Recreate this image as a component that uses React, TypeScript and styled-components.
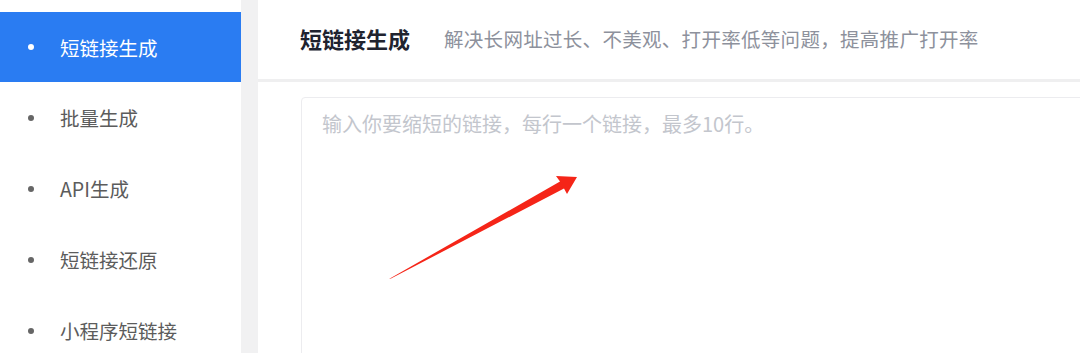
import React from 'react';
import styled, { createGlobalStyle } from 'styled-components';

const GlobalStyle = createGlobalStyle`
  html, body {
    margin: 0;
    padding: 0;
    background: #fff;
    overflow: hidden;
  }
  * {
    box-sizing: border-box;
  }
`;

const Page = styled.div`
  position: relative;
  display: flex;
  width: 1080px;
  height: 353px;
  overflow: hidden;
  font-family: 'Noto Sans CJK SC', 'Noto Sans', sans-serif;
`;

const Sidebar = styled.nav`
  width: 241px;
  flex: none;
  padding-top: 12px;
  display: flex;
  flex-direction: column;
  background: #fff;
`;

const NavItem = styled.div<{ $active?: boolean }>`
  flex: none;
  height: ${(props) => (props.$active ? '70px' : '71px')};
  display: flex;
  align-items: center;
  padding-left: 28px;
  font-size: 19.5px;
  color: ${(props) => (props.$active ? '#fff' : '#5c5c5c')};
  background: ${(props) => (props.$active ? '#2a7cf2' : 'transparent')};
  cursor: pointer;
`;

const Bullet = styled.span<{ $active?: boolean }>`
  width: 6px;
  height: 6px;
  border-radius: 50%;
  margin-right: 26px;
  background: ${(props) => (props.$active ? '#fff' : '#666')};
`;

const Gutter = styled.div`
  width: 17px;
  flex: none;
  background: #f1f1f2;
`;

const Main = styled.main`
  width: 860px;
  flex: none;
  display: flex;
  flex-direction: column;
`;

const Header = styled.header`
  height: 82px;
  flex: none;
  display: flex;
  align-items: center;
  gap: 34px;
  padding: 0 0 3px 42px;
  border-bottom: 3px solid #efeff0;
`;

const Title = styled.h1`
  margin: 0;
  font-size: 22px;
  font-weight: 700;
  color: #20232f;
`;

const Subtitle = styled.p`
  margin: 0;
  font-size: 19.5px;
  letter-spacing: 0.3px;
  color: #8d919c;
`;

const Body = styled.section`
  flex: 1;
  padding: 15px 0 0 43px;
`;

const LinkInput = styled.textarea`
  display: block;
  width: 100%;
  height: 300px;
  padding: 12px 20px;
  border: 1px solid #ececef;
  border-radius: 4px;
  resize: none;
  outline: none;
  font-family: inherit;
  font-size: 20px;
  line-height: 28px;
  color: #333;
  &::placeholder {
    color: #c3c6cd;
  }
`;

const Annotation = styled.svg`
  position: absolute;
  left: 0;
  top: 0;
  pointer-events: none;
`;

const navItems = ['短链接生成', '批量生成', 'API生成', '短链接还原', '小程序短链接'];

export default function App() {
  return (
    <Page>
      <GlobalStyle />
      <Sidebar>
        {navItems.map((item, i) => (
          <NavItem key={item} $active={i === 0}>
            <Bullet $active={i === 0} />
            {item}
          </NavItem>
        ))}
      </Sidebar>
      <Gutter />
      <Main>
        <Header>
          <Title>短链接生成</Title>
          <Subtitle>解决长网址过长、不美观、打开率低等问题，提高推广打开率</Subtitle>
        </Header>
        <Body>
          <LinkInput placeholder='输入你要缩短的链接，每行一个链接，最多10行。' />
        </Body>
      </Main>
      {/* red arrow drawn over the input */}
      <Annotation width='1080' height='353' viewBox='0 0 1080 353'>
        <polygon
          points='389,279 560,181.5 556,176 577,177 567,194 564,188.5 391,278.5'
          fill='#f52518'
        />
      </Annotation>
    </Page>
  );
}
